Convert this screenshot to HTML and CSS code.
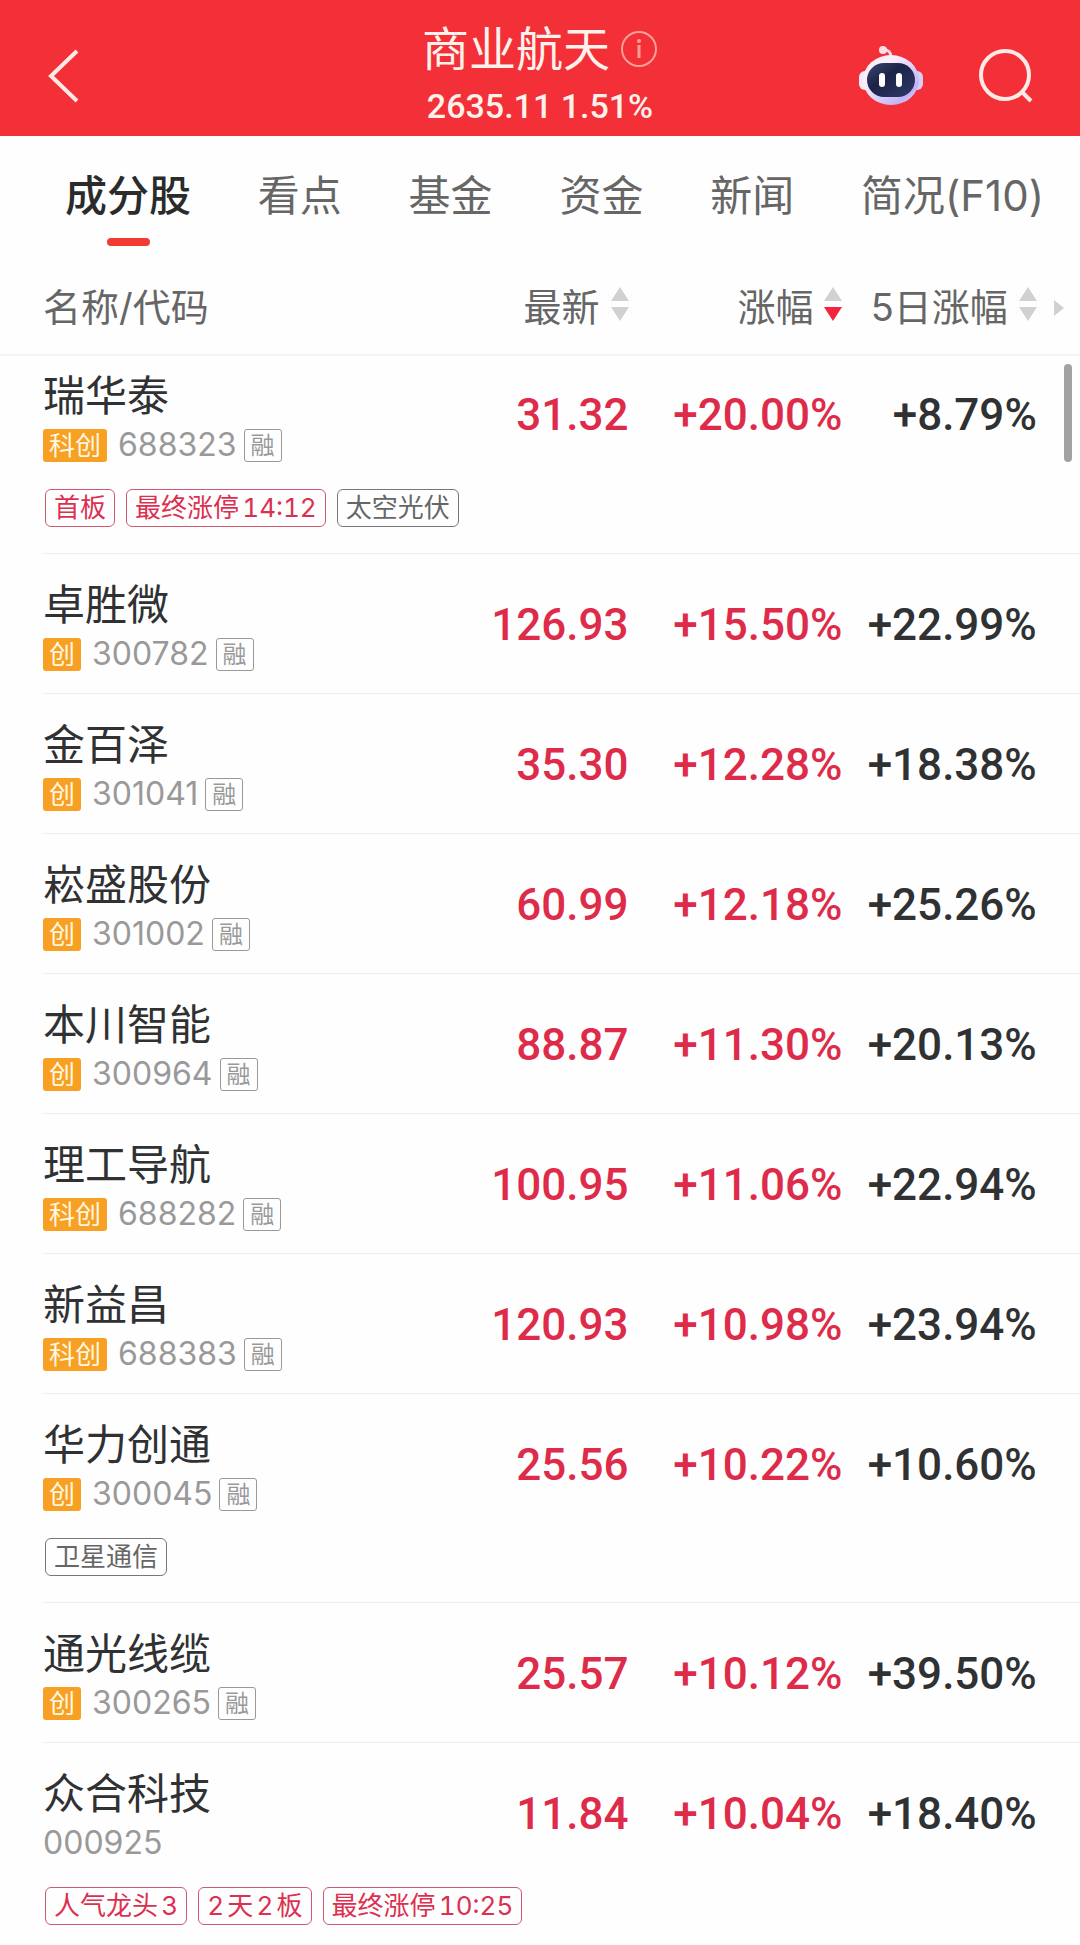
FILE: index.html
```
<!DOCTYPE html>
<html lang="zh-CN">
<head>
    <meta charset="UTF-8">
    <meta name="viewport" content="width=device-width, initial-scale=1.0">
    <link rel="stylesheet" href="styles.css">
    <title>商业航天</title>
</head>

<body>
    <header class="topbar">
        <button class="icon-btn back" aria-label="返回">
            <svg width="34" height="56" viewBox="0 0 34 56"><path d="M31 3L5 28l26 25" fill="none" stroke="#ffeae5" stroke-width="4"/></svg>
        </button>

        <div class="heading">
            <div class="title-line">
                <h1>商业航天</h1>
                <button class="icon-btn" aria-label="板块说明">
                    <svg width="38" height="38" viewBox="0 0 38 38">
                        <circle cx="19" cy="19" r="17" fill="none" stroke="#ff9f98" stroke-width="2"/>
                        <path d="M19 15v13" stroke="#ff9f98" stroke-width="3"/>
                        <circle cx="19" cy="11" r="2" fill="#ff9f98"/>
                    </svg>
                </button>
            </div>
            <p class="index">2635.11 1.51%</p>
        </div>

        <div class="actions">
            <button class="icon-btn" aria-label="智能助手">
                <svg width="66" height="62" viewBox="0 0 66 62">
                    <defs>
                        <linearGradient id="shell" x1="0" y1="0" x2="1" y2="1">
                            <stop offset="0.3" stop-color="#fbeefb"/>
                            <stop offset="0.8" stop-color="#bfb4f5"/>
                            <stop offset="1" stop-color="#f6e4fb"/>
                        </linearGradient>
                        <linearGradient id="visor" x1="0" y1="0" x2="1" y2="1">
                            <stop offset="0" stop-color="#40466f"/>
                            <stop offset="0.4" stop-color="#1c2349"/>
                            <stop offset="1" stop-color="#303869"/>
                        </linearGradient>
                    </defs>
                    <path d="M25 5q8-1 8 8" fill="none" stroke="#fbd9e4" stroke-width="3"/>
                    <circle cx="25" cy="5" r="4" fill="#ffdfe6"/>
                    <rect x="1" y="26" width="12" height="19" rx="6" fill="#f7e9f8"/>
                    <rect x="53" y="26" width="12" height="19" rx="6" fill="#d9cdf8"/>
                    <ellipse cx="33" cy="35" rx="28" ry="25" fill="url(#shell)"/>
                    <rect x="9" y="18" width="48" height="34" rx="17" fill="url(#visor)"/>
                    <rect x="21" y="28" width="6" height="14" rx="3" fill="#fff"/>
                    <rect x="38" y="28" width="6" height="14" rx="3" fill="#fff"/>
                </svg>
            </button>
            <button class="icon-btn" aria-label="搜索">
                <svg width="56" height="56" viewBox="0 0 56 56">
                    <circle cx="27" cy="27" r="24" fill="none" stroke="#ffeae5" stroke-width="4"/>
                    <path d="M43 43l10 10" stroke="#ffeae5" stroke-width="4"/>
                </svg>
            </button>
        </div>
    </header>

    <nav class="tabs">
        <a href="#stocks" class="active">成分股</a>
        <a href="#views">看点</a>
        <a href="#funds">基金</a>
        <a href="#capital">资金</a>
        <a href="#news">新闻</a>
        <a href="#brief">简况(F10)</a>
    </nav>

    <main id="stocks">
        <table class="stocks">
            <colgroup>
                <col class="c-name"><col class="c-price"><col class="c-change"><col class="c-five"><col class="c-more">
            </colgroup>
            <thead>
                <tr>
                    <th>名称/代码</th>
                    <th><button class="sort">最新<svg width="18" height="34" viewBox="0 0 18 34"><path d="M9 0l9 14H0z"/><path d="M0 20h18L9 34z"/></svg></button></th>
                    <th aria-sort="descending"><button class="sort">涨幅<svg width="18" height="34" viewBox="0 0 18 34"><path d="M9 0l9 14H0z"/><path class="on" d="M0 20h18L9 34z"/></svg></button></th>
                    <th><button class="sort">5日涨幅<svg width="18" height="34" viewBox="0 0 18 34"><path d="M9 0l9 14H0z"/><path d="M0 20h18L9 34z"/></svg></button></th>
                    <th><button class="sort more" aria-label="更多列"><svg width="10" height="16" viewBox="0 0 10 16"><path d="M0 0l10 8-10 8z"/></svg></button></th>
                </tr>
            </thead>

            <tbody class="first">
                <tr>
                    <td><div class="name">瑞华泰</div><div class="code"><span class="board">科创</span>688323<span class="margin">融</span></div></td>
                    <td class="up">31.32</td><td class="up">+20.00%</td><td>+8.79%</td><td></td>
                </tr>
                <tr>
                    <td colspan="5" class="tags"><div><span class="tag hot">首板</span><span class="tag hot">最终涨停14:12</span><span class="tag">太空光伏</span></div></td>
                </tr>
            </tbody>
            <tbody>
                <tr>
                    <td><div class="name">卓胜微</div><div class="code"><span class="board">创</span>300782<span class="margin">融</span></div></td>
                    <td class="up">126.93</td><td class="up">+15.50%</td><td>+22.99%</td><td></td>
                </tr>
            </tbody>
            <tbody>
                <tr>
                    <td><div class="name">金百泽</div><div class="code"><span class="board">创</span>301041<span class="margin">融</span></div></td>
                    <td class="up">35.30</td><td class="up">+12.28%</td><td>+18.38%</td><td></td>
                </tr>
            </tbody>
            <tbody>
                <tr>
                    <td><div class="name">崧盛股份</div><div class="code"><span class="board">创</span>301002<span class="margin">融</span></div></td>
                    <td class="up">60.99</td><td class="up">+12.18%</td><td>+25.26%</td><td></td>
                </tr>
            </tbody>
            <tbody>
                <tr>
                    <td><div class="name">本川智能</div><div class="code"><span class="board">创</span>300964<span class="margin">融</span></div></td>
                    <td class="up">88.87</td><td class="up">+11.30%</td><td>+20.13%</td><td></td>
                </tr>
            </tbody>
            <tbody>
                <tr>
                    <td><div class="name">理工导航</div><div class="code"><span class="board">科创</span>688282<span class="margin">融</span></div></td>
                    <td class="up">100.95</td><td class="up">+11.06%</td><td>+22.94%</td><td></td>
                </tr>
            </tbody>
            <tbody>
                <tr>
                    <td><div class="name">新益昌</div><div class="code"><span class="board">科创</span>688383<span class="margin">融</span></div></td>
                    <td class="up">120.93</td><td class="up">+10.98%</td><td>+23.94%</td><td></td>
                </tr>
            </tbody>
            <tbody>
                <tr>
                    <td><div class="name">华力创通</div><div class="code"><span class="board">创</span>300045<span class="margin">融</span></div></td>
                    <td class="up">25.56</td><td class="up">+10.22%</td><td>+10.60%</td><td></td>
                </tr>
                <tr>
                    <td colspan="5" class="tags"><div><span class="tag">卫星通信</span></div></td>
                </tr>
            </tbody>
            <tbody>
                <tr>
                    <td><div class="name">通光线缆</div><div class="code"><span class="board">创</span>300265<span class="margin">融</span></div></td>
                    <td class="up">25.57</td><td class="up">+10.12%</td><td>+39.50%</td><td></td>
                </tr>
            </tbody>
            <tbody class="last">
                <tr>
                    <td><div class="name">众合科技</div><div class="code">000925</div></td>
                    <td class="up">11.84</td><td class="up">+10.04%</td><td>+18.40%</td><td></td>
                </tr>
                <tr>
                    <td colspan="5" class="tags"><div><span class="tag hot">人气龙头3</span><span class="tag hot">2天2板</span><span class="tag hot">最终涨停10:25</span></div></td>
                </tr>
            </tbody>
        </table>
        <div class="scroll-thumb"></div>
    </main>
</body>
</html>
```
FILE: styles.css
```
* {
    box-sizing: border-box;
}

body {
    margin: 0px;
    background-color: #fefefe;
    color: #303133;
    font-family: Inter, "Noto Sans CJK SC", sans-serif;
}

button {
    padding: 0px;
    border: 0px;
    background: none;
    color: inherit;
    font: inherit;
}

svg {
    display: block;
}

/* red header */
.topbar {
    display: grid;
    grid-template-columns: 1fr auto 1fr;
    align-items: center;
    height: 136px;
    padding-inline: 46px;
    background-color: #f32f38;
    color: #fff1ec;
}

.back {
    justify-self: start;
    margin-top: 16px;
}

.heading {
    padding-top: 12px;
    text-align: center;
}

.title-line {
    display: flex;
    align-items: center;
    justify-content: center;
    gap: 10px;
}

h1 {
    margin: 0px;
    font-size: 47px;
    font-weight: 400;
    line-height: 54px;
}

.index {
    margin: 0px;
    padding-top: 10px;
    font-family: Roboto, sans-serif;
    font-size: 34px;
    font-weight: 500;
    line-height: 40px;
}

.actions {
    display: flex;
    align-items: center;
    justify-self: end;
    gap: 54px;
    margin-top: 16px;
}

/* tabs */
.tabs {
    display: flex;
    justify-content: space-between;
    padding: 32px 36px 0px 65px;
    white-space: nowrap;
}

.tabs a {
    color: #666;
    font-size: 42px;
    line-height: 56px;
    text-decoration: none;
}

.tabs .active {
    color: #2b2b2b;
    font-weight: 500;
}

.tabs .active::after {
    content: "";
    display: block;
    width: 43px;
    height: 8px;
    margin: 14px auto 0px;
    border-radius: 4px;
    background-color: #f03c32;
}

/* stock list */
main {
    position: relative;
}

.stocks {
    width: 100%;
    table-layout: fixed;
    border-spacing: 0px;
}

.c-name { width: 40%; }
.c-price { width: 18.2%; }
.c-change { width: 19.8%; }
.c-five { width: 18%; }
.c-more { width: 4%; }

th {
    height: 110px;
    padding: 8px 0px 0px;
    border-bottom: 2px solid #f4f4f4;
    color: #666;
    font-size: 38px;
    font-weight: 400;
    text-align: right;
    white-space: nowrap;
}

th:first-child {
    padding-left: 43px;
    text-align: left;
}

.sort {
    display: inline-flex;
    align-items: center;
    gap: 11px;
    vertical-align: middle;
}

.sort path {
    fill: #d0d2d2;
}

.sort .on {
    fill: #f4243c;
}

.more {
    margin-right: 16px;
}

tbody {
    background: linear-gradient(#efefef, #efefef) 43px 0px / 100% 1px no-repeat;
}

td {
    height: 140px;
    padding: 47px 0px 0px;
    font-family: Roboto, sans-serif;
    font-size: 44px;
    font-weight: 500;
    line-height: 50px;
    text-align: right;
    vertical-align: top;
    white-space: nowrap;
}

td:first-child {
    padding: 27px 0px 0px 43px;
    font-family: inherit;
    font-weight: 400;
    text-align: left;
}

.up {
    color: #df2b4a;
}

.name {
    font-size: 42px;
}

.code {
    display: flex;
    align-items: center;
    height: 48px;
    color: #999;
    font-size: 32px;
}

.board,
.margin {
    height: 33px;
    padding-inline: 6px;
    border-radius: 3px;
    font-size: 26px;
    line-height: 33px;
}

.board {
    margin-right: 11px;
    background-color: #f8a024;
    color: #fff8e0;
}

.margin {
    margin-left: 7px;
    border: 1px solid #999;
    font-size: 24px;
    line-height: 31px;
}

/* second line of a stock, the plain one is grey */
td.tags {
    height: 69px;
    padding: 5px 0px 0px 45px;
}

.tags div {
    display: flex;
    gap: 11px;
}

.tag {
    height: 38px;
    padding-inline: 8px;
    border: 1px solid #777;
    border-radius: 6px;
    color: #666;
    font-size: 26px;
    font-variant-numeric: tabular-nums;
    line-height: 36px;
    text-autospace: normal;
}

.hot {
    border-color: #cf5a70;
    color: #dc3050;
}

/* first stock is partly scrolled under the column titles */
.first {
    background: none;
}

.first td {
    height: 128px;
    padding-top: 34px;
}

.first td:first-child {
    padding-top: 15px;
}

.first td.tags {
    height: 69px;
    padding-top: 5px;
}

.last td.tags {
    height: 61px;
}

.scroll-thumb {
    position: absolute;
    top: 118px;
    right: 8px;
    width: 8px;
    height: 98px;
    border-radius: 4px;
    background-color: #a2a2a2;
}
```
